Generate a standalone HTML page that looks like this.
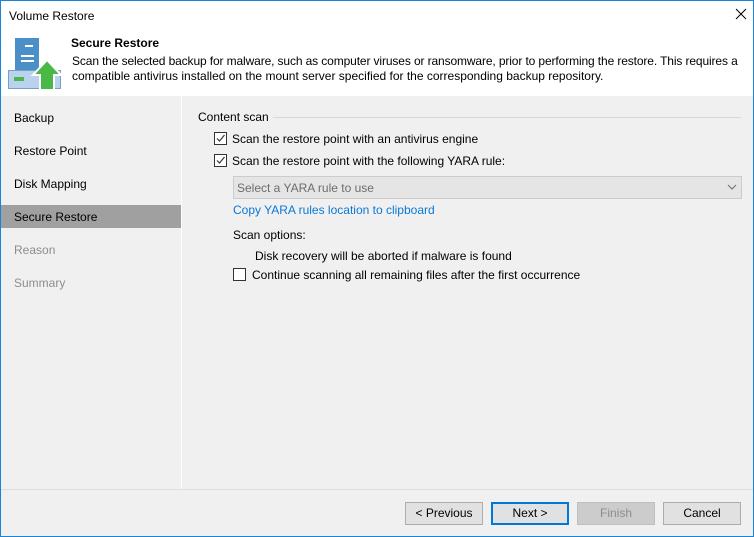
<!DOCTYPE html>
<html><head><style>
*{margin:0;padding:0;box-sizing:border-box}
body{width:754px;height:537px;overflow:hidden;font-family:"Liberation Sans",sans-serif;font-size:12px;color:#000;background:#f0f0f0}
.win{position:absolute;left:0;top:0;width:754px;height:537px;border:1px solid #1883d7;background:#f0f0f0}
.hdr{position:absolute;left:0;top:0;width:752px;height:95px;background:#fff}
.t{position:absolute;white-space:nowrap}
.side{position:absolute;left:0;top:95px;width:181px;height:393px;background:#f0f0f0;border-right:1px solid #fff}
.nav{position:absolute;left:13px;font-size:12px}
.sel{position:absolute;left:0;top:109px;width:180px;height:23px;background:#a0a0a0}
.cb{position:absolute;width:13px;height:13px;border:1px solid #333;background:#fff}
.btn{position:absolute;top:501px;width:78px;height:23px;border:1px solid #adadad;background:#e1e1e1;text-align:center;line-height:21px}
</style></head><body>
<div class="win">
<div class="hdr">
<div class="t" style="left:8px;top:8px">Volume Restore</div>
<svg style="position:absolute;left:734px;top:7px" width="12" height="12"><path d="M1,1 L11,11 M11,1 L1,11" stroke="#000" stroke-width="1"/></svg>
<svg style="position:absolute;left:6px;top:36px" width="56" height="56">
<rect x="8" y="1" width="24" height="44" fill="#4a8fc8"/>
<rect x="18" y="8" width="8" height="2" fill="#fff"/>
<rect x="14" y="18" width="13" height="2" fill="#fff"/>
<rect x="14" y="23" width="13" height="2" fill="#fff"/>
<rect x="1.5" y="33.5" width="52" height="18" fill="#b9d3ee" stroke="#7a9fc4"/>
<rect x="7" y="40" width="10" height="4" fill="#4ab847"/>
<polygon points="40,23 54,38 47,38 47,53 33,53 33,38 26,38" fill="#4ab847" stroke="#fff" stroke-width="2"/>
</svg>
<div class="t" style="left:70px;top:35px;font-weight:bold">Secure Restore</div>
<div class="t" style="left:71px;top:53px;letter-spacing:-0.12px">Scan the selected backup for malware, such as computer viruses or ransomware, prior to performing the restore. This requires a</div>
<div class="t" style="left:71px;top:68px">compatible antivirus installed on the mount server specified for the corresponding backup repository.</div>
</div>
<div class="side">
<div class="sel"></div>
<div class="nav" style="top:15px">Backup</div>
<div class="nav" style="top:48px">Restore Point</div>
<div class="nav" style="top:81px">Disk Mapping</div>
<div class="nav" style="top:114px">Secure Restore</div>
<div class="nav" style="top:147px;color:#8d8d8d">Reason</div>
<div class="nav" style="top:180px;color:#8d8d8d">Summary</div>
</div>
<div class="t" style="left:197px;top:109px">Content scan</div>
<div style="position:absolute;left:272px;top:116px;width:468px;height:1px;background:#d9d9d9"></div>
<div class="cb" style="left:213px;top:131px"></div>
<svg style="position:absolute;left:213px;top:131px" width="13" height="13"><polyline points="3,6.5 5.5,9 10.5,3" fill="none" stroke="#333" stroke-width="1.2"/></svg>
<div class="t" style="left:231px;top:131px">Scan the restore point with an antivirus engine</div>
<div class="cb" style="left:213px;top:153px"></div>
<svg style="position:absolute;left:213px;top:153px" width="13" height="13"><polyline points="3,6.5 5.5,9 10.5,3" fill="none" stroke="#333" stroke-width="1.2"/></svg>
<div class="t" style="left:231px;top:153px">Scan the restore point with the following YARA rule:</div>
<div style="position:absolute;left:232px;top:175px;width:509px;height:23px;border:1px solid #ccc;background:#e5e5e5"></div>
<div class="t" style="left:236px;top:180px;color:#6d6d6d">Select a YARA rule to use</div>
<svg style="position:absolute;left:726px;top:183px" width="10" height="6"><polyline points="1,1 5,5 9,1" fill="none" stroke="#777" stroke-width="1.2"/></svg>
<div class="t" style="left:232px;top:202px;color:#0a78d7">Copy YARA rules location to clipboard</div>
<div class="t" style="left:232px;top:227px">Scan options:</div>
<div class="t" style="left:254px;top:248px">Disk recovery will be aborted if malware is found</div>
<div class="cb" style="left:232px;top:267px"></div>
<div class="t" style="left:251px;top:267px">Continue scanning all remaining files after the first occurrence</div>
<div style="position:absolute;left:0;top:488px;width:752px;height:1px;background:#dcdcdc"></div>
<div class="btn" style="left:404px">&lt; Previous</div>
<div class="btn" style="left:490px;border:2px solid #0078d7;line-height:19px">Next &gt;</div>
<div class="btn" style="left:576px;background:#cccccc;border-color:#bfbfbf;color:#8d8d8d">Finish</div>
<div class="btn" style="left:662px">Cancel</div>
</div>
</body></html>
